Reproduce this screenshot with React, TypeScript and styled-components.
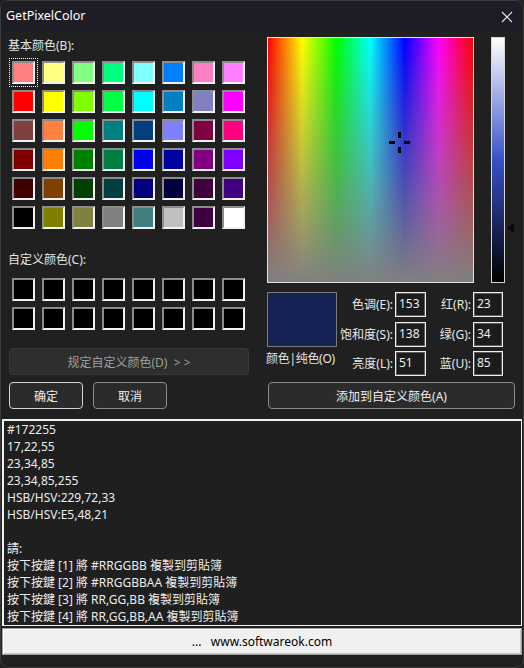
import styled, { createGlobalStyle } from "styled-components";

const UI_FONT = `"Noto Sans", "Noto Sans CJK SC", sans-serif`;
const TEXT_FONT = `"Noto Sans", "Noto Sans CJK TC", sans-serif`;

const GlobalStyle = createGlobalStyle`
  html, body {
    margin: 0;
    padding: 0;
    background: #202020;
  }
  body {
    font-family: ${UI_FONT};
  }
`;

const BASIC_COLORS = [
  "#FF8080", "#FFFF80", "#80FF80", "#00FF80", "#80FFFF", "#0080FF", "#FF80C0", "#FF80FF",
  "#FF0000", "#FFFF00", "#80FF00", "#00FF40", "#00FFFF", "#0080C0", "#8080C0", "#FF00FF",
  "#804040", "#FF8040", "#00FF00", "#008080", "#004080", "#8080FF", "#800040", "#FF0080",
  "#800000", "#FF8000", "#008000", "#008040", "#0000FF", "#0000A0", "#800080", "#8000FF",
  "#400000", "#804000", "#004000", "#004040", "#000080", "#000040", "#400040", "#400080",
  "#000000", "#808000", "#808040", "#808080", "#408080", "#C0C0C0", "#400040", "#FFFFFF",
];

const CUSTOM_COLORS = Array.from({ length: 16 }, () => "#000000");

const HSL = { hue: 153, sat: 138, lum: 51 };
const RGB = { r: 23, g: 34, b: 85 };

const OUTPUT_LINES = [
  "#172255",
  "17,22,55",
  "23,34,85",
  "23,34,85,255",
  "HSB/HSV:229,72,33",
  "HSB/HSV:E5,48,21",
  "",
  "請:",
  "按下按鍵 [1] 將 #RRGGBB 複製到剪貼簿",
  "按下按鍵 [2] 將 #RRGGBBAA 複製到剪貼簿",
  "按下按鍵 [3] 將 RR,GG,BB 複製到剪貼簿",
  "按下按鍵 [4] 將 RR,GG,BB,AA 複製到剪貼簿",
];

const SPECTRUM_W = 207;
const SPECTRUM_H = 246;

export default function App() {
  const crossX = (HSL.hue / 240) * (SPECTRUM_W - 2);
  const crossY = (1 - HSL.sat / 240) * (SPECTRUM_H - 2);
  const arrowTop = (1 - HSL.lum / 240) * (SPECTRUM_H - 2) - 6;

  return (
    <>
      <GlobalStyle />
      <Window>
        <TitleBar>
          <Title>GetPixelColor</Title>
          <CloseIcon width="12" height="12" viewBox="0 0 12 12">
            <path d="M1 1 L11 11 M11 1 L1 11" stroke="#e8e8e8" strokeWidth="1.1" fill="none" />
          </CloseIcon>
        </TitleBar>

        <Main>
          <LeftColumn>
            <Label>基本颜色(B):</Label>
            <SwatchGrid>
              {BASIC_COLORS.map((c, i) => (
                <Swatch key={i} $color={c} $focused={i === 0} />
              ))}
            </SwatchGrid>

            <CustomLabel>自定义颜色(C):</CustomLabel>
            <CustomGrid>
              {CUSTOM_COLORS.map((c, i) => (
                <Swatch key={i} $color={c} />
              ))}
            </CustomGrid>

            <DefineButton>{"规定自定义颜色(D)  > >"}</DefineButton>

            <ButtonRow>
              <DialogButton $primary>确定</DialogButton>
              <DialogButton>取消</DialogButton>
            </ButtonRow>
          </LeftColumn>

          <RightColumn>
            <PickerRow>
              <Spectrum>
                <Crosshair
                  width="21"
                  height="21"
                  viewBox="0 0 21 21"
                  style={{ left: crossX - 10, top: crossY - 10 }}
                >
                  <g fill="#000">
                    <rect x="0" y="9" width="6" height="3" />
                    <rect x="15" y="9" width="6" height="3" />
                    <rect x="9" y="0" width="3" height="6" />
                    <rect x="9" y="15" width="3" height="6" />
                  </g>
                </Crosshair>
              </Spectrum>
              <LumTrack>
                <LumBar />
                <LumArrow width="7" height="10" viewBox="0 0 7 10" style={{ top: arrowTop }}>
                  <path d="M7 0 L0 5 L7 10 Z" fill="#0a0a0a" />
                </LumArrow>
              </LumTrack>
            </PickerRow>

            <InfoRow>
              <PreviewColumn>
                <Preview $color="#172255" />
                <PreviewLabel>颜色|纯色(O)</PreviewLabel>
              </PreviewColumn>
              <FieldGrid>
                <FieldLabel>色调(E):</FieldLabel>
                <Field>{HSL.hue}</Field>
                <FieldLabel>红(R):</FieldLabel>
                <Field>{RGB.r}</Field>

                <FieldLabel>饱和度(S):</FieldLabel>
                <Field>{HSL.sat}</Field>
                <FieldLabel>绿(G):</FieldLabel>
                <Field>{RGB.g}</Field>

                <FieldLabel>亮度(L):</FieldLabel>
                <Field>{HSL.lum}</Field>
                <FieldLabel>蓝(U):</FieldLabel>
                <Field>{RGB.b}</Field>
              </FieldGrid>
            </InfoRow>

            <AddButton>添加到自定义颜色(A)</AddButton>
          </RightColumn>
        </Main>

        <OutputPanel>
          {OUTPUT_LINES.map((line, i) => (
            <OutputLine key={i}>{line || "\u00a0"}</OutputLine>
          ))}
        </OutputPanel>

        <FooterButton>{"...   www.softwareok.com"}</FooterButton>
      </Window>
    </>
  );
}

const Window = styled.div`
  width: 524px;
  height: 668px;
  box-sizing: border-box;
  border: 1px solid #3b3b3b;
  border-radius: 8px;
  overflow: hidden;
  background: #202020;
  display: flex;
  flex-direction: column;
`;

const TitleBar = styled.div`
  height: 29px;
  flex-shrink: 0;
  background: #1e1c25;
  display: flex;
  align-items: center;
  justify-content: space-between;
  padding: 0 10px 2px 5px;
`;

const Title = styled.span`
  font-family: ${UI_FONT};
  font-size: 12.5px;
  color: #ffffff;
`;

const CloseIcon = styled.svg`
  display: block;
  margin-top: 2px;
`;

const Main = styled.div`
  display: flex;
  padding-left: 7px;
`;

const LeftColumn = styled.div`
  width: 243px;
  padding-top: 6px;
  display: flex;
  flex-direction: column;
`;

const Label = styled.div`
  font-family: ${UI_FONT};
  font-size: 12px;
  line-height: 16px;
  color: #e4e4e4;
  white-space: nowrap;
`;

const CustomLabel = styled(Label)`
  margin-top: 23px;
`;

const SwatchGrid = styled.div`
  display: grid;
  grid-template-columns: repeat(8, 23px);
  column-gap: 7px;
  row-gap: 6px;
  margin: 7px 0 0 4px;
`;

const CustomGrid = styled(SwatchGrid)`
  margin-top: 10px;
`;

const Swatch = styled.div<{ $color: string; $focused?: boolean }>`
  width: 23px;
  height: 23px;
  box-sizing: border-box;
  border: 2px solid;
  border-color: #8c8c8c #f2f2f2 #f2f2f2 #8c8c8c;
  background: ${(p) => p.$color};
  outline: ${(p) => (p.$focused ? "1px dotted #ffffff" : "none")};
  outline-offset: 2px;
`;

const ButtonBase = styled.div`
  box-sizing: border-box;
  height: 27px;
  border-radius: 4px;
  background: #2b2b2b;
  display: flex;
  align-items: center;
  justify-content: center;
  font-family: ${UI_FONT};
  font-size: 12px;
  color: #ececec;
  white-space: pre;
`;

const DefineButton = styled(ButtonBase)`
  margin: 18px 0 0 1px;
  width: 240px;
  background: #2e2e2e;
  border: 1px solid #393939;
  color: #9e9e9e;
`;

const ButtonRow = styled.div`
  display: flex;
  gap: 10px;
  margin: 7px 0 0 1px;
`;

const DialogButton = styled(ButtonBase)<{ $primary?: boolean }>`
  width: 74px;
  border: 1px solid ${(p) => (p.$primary ? "#d4d4d4" : "#8a8a8a")};
`;

const RightColumn = styled.div`
  margin-left: 16px;
  width: 248px;
  padding-top: 5px;
  display: flex;
  flex-direction: column;
`;

const PickerRow = styled.div`
  display: flex;
  height: ${SPECTRUM_H}px;
`;

const Spectrum = styled.div`
  position: relative;
  width: ${SPECTRUM_W}px;
  height: ${SPECTRUM_H}px;
  box-sizing: border-box;
  border: 1px solid #e2e2e2;
  background:
    linear-gradient(to bottom, rgba(128, 128, 128, 0), #808080),
    linear-gradient(to right, #ff0000, #ffff00, #00ff00, #00ffff, #0000ff, #ff00ff, #ff0000);
`;

const Crosshair = styled.svg`
  position: absolute;
  display: block;
`;

const LumTrack = styled.div`
  position: relative;
  margin-left: 17px;
  width: 24px;
`;

const LumBar = styled.div`
  width: 14px;
  height: ${SPECTRUM_H}px;
  box-sizing: border-box;
  border: 1px solid #d6d6d6;
  background: linear-gradient(to bottom, #ffffff, rgb(54, 81, 201), #000000);
`;

const LumArrow = styled.svg`
  position: absolute;
  left: 16px;
  display: block;
`;

const InfoRow = styled.div`
  display: flex;
  margin-top: 9px;
`;

const PreviewColumn = styled.div`
  width: 70px;
  display: flex;
  flex-direction: column;
`;

const Preview = styled.div<{ $color: string }>`
  width: 70px;
  height: 55px;
  box-sizing: border-box;
  border: 1px solid #7a7a7a;
  background: ${(p) => p.$color};
`;

const PreviewLabel = styled(Label)`
  margin-top: 4px;
  margin-left: -1px;
  letter-spacing: -0.3px;
`;

const FieldGrid = styled.div`
  display: grid;
  grid-template-columns: 56px 31px 43px 30px;
  grid-auto-rows: 25px;
  column-gap: 2px;
  row-gap: 4.5px;
`;

const FieldLabel = styled.div`
  font-family: ${UI_FONT};
  font-size: 12px;
  line-height: 25px;
  color: #e8e8e8;
  text-align: right;
  white-space: nowrap;
`;

const Field = styled.div`
  box-sizing: border-box;
  height: 25px;
  border: 1px solid #f0f0f0;
  box-shadow: inset 0 0 0 1px #5a5a5a;
  background: #1c1c1c;
  padding: 0 3px;
  font-family: ${UI_FONT};
  font-size: 12px;
  line-height: 21px;
  color: #ececec;
`;

const AddButton = styled(ButtonBase)`
  margin: 6px 0 0 1px;
  width: 247px;
  border: 1px solid #8a8a8a;
`;

const OutputPanel = styled.div`
  margin: 10px 1px 0;
  height: 207px;
  box-sizing: border-box;
  border: 1px solid #f2f2f2;
  border-top-width: 2px;
  border-left-width: 2px;
  background: #1f1f1f;
  padding: 0 0 0 3px;
  overflow: hidden;
`;

const OutputLine = styled.div`
  font-family: ${TEXT_FONT};
  font-size: 12px;
  line-height: 17px;
  color: #ececec;
  white-space: pre;
`;

const FooterButton = styled.div`
  margin: 2px 1px 0;
  height: 27px;
  box-sizing: border-box;
  border: 1px solid #a0a0a0;
  box-shadow: inset 1px 1px 0 #ffffff, inset -1px -1px 0 #c4c4c4;
  background: #f0f0f0;
  display: flex;
  align-items: center;
  justify-content: center;
  font-family: ${UI_FONT};
  font-size: 12px;
  color: #000000;
  white-space: pre;
`;
